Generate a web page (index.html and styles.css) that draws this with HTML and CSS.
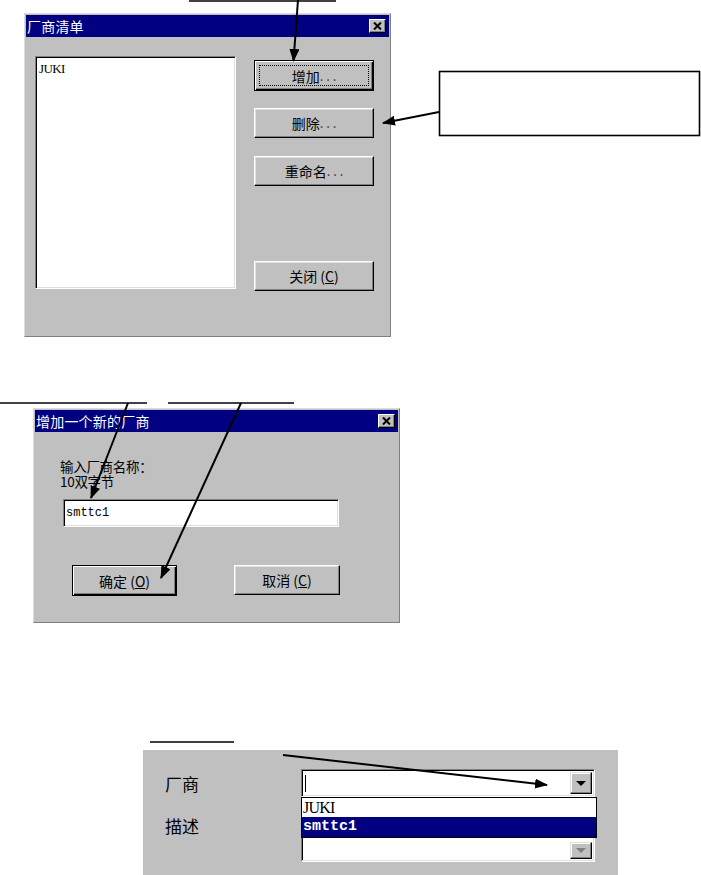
FILE: index.html
```html
<!DOCTYPE html>
<html lang="zh">
<head>
<meta charset="utf-8">
<title>厂商清单</title>
<link rel="stylesheet" href="styles.css">
</head>
<body>
<div class="page">
  <section class="dialog dlg-list">
    <div class="titlebar"><span class="title">厂商清单</span><span class="close"><svg width="9" height="8" viewBox="0 0 9 8"><path d="M1 0.5 L8 7.5 M8 0.5 L1 7.5" stroke="#000" stroke-width="2"/></svg></span></div>
    <div class="dlg-body list-body">
      <div class="listbox"><div class="serif-item">JUKI</div></div>
      <div class="btn-col">
        <button class="btn btn-default"><span class="focus">增加<span class="dots">. . .</span></span></button>
        <button class="btn">删除<span class="dots">. . .</span></button>
        <button class="btn">重命名<span class="dots">. . .</span></button>
        <button class="btn btn-close">关闭 (<u>C</u>)</button>
      </div>
    </div>
  </section>

  <section class="dialog dlg-add">
    <div class="titlebar"><span class="title">增加一个新的厂商</span><span class="close"><svg width="9" height="8" viewBox="0 0 9 8"><path d="M1 0.5 L8 7.5 M8 0.5 L1 7.5" stroke="#000" stroke-width="2"/></svg></span></div>
    <div class="dlg-body add-body">
      <div class="prompt">
        <div class="prompt-line">输入厂商名称：</div>
        <div class="prompt-line">10双字节</div>
      </div>
      <div class="textbox">smttc1</div>
      <div class="add-btns">
        <button class="btn btn-default btn-ok">确定 (<u>O</u>)</button>
        <button class="btn btn-cancel">取消 (<u>C</u>)</button>
      </div>
    </div>
  </section>

  <section class="panel">
    <div class="labels">
      <div class="lbl">厂商</div>
      <div class="lbl lbl2">描述</div>
    </div>
    <div class="fields">
      <div class="combo"><div class="combo-text"><span class="caret"></span></div><div class="combo-btn"><span class="tri"></span></div></div>
      <div class="droplist">
        <div class="drop-item serif-big">JUKI</div>
        <div class="drop-item mono-big selected">smttc1</div>
      </div>
      <div class="combo combo2"><div class="combo-text"></div><div class="combo-btn"><span class="tri tri-dis"></span></div></div>
    </div>
  </section>

  <svg class="overlay" width="701" height="875" viewBox="0 0 701 875">
    <defs>
      <marker id="ah" markerWidth="13" markerHeight="10" refX="12" refY="5" orient="auto" markerUnits="userSpaceOnUse">
        <path d="M0,0 L13,5 L0,10 z" fill="#000"/>
      </marker>
    </defs>
    <g stroke="#000" fill="none">
      <line x1="189" y1="1" x2="336" y2="1" stroke-width="1.4"/>
      <line x1="298" y1="0" x2="293.5" y2="61" stroke-width="2" marker-end="url(#ah)"/>
      <rect x="439.5" y="71.5" width="260" height="64" fill="#fff" stroke-width="1.6"/>
      <line x1="439" y1="112" x2="383" y2="123" stroke-width="2" marker-end="url(#ah)"/>
      <line x1="0" y1="403" x2="147" y2="403" stroke-width="1.4"/>
      <line x1="168" y1="403" x2="294" y2="403" stroke-width="1.4"/>
      <line x1="128" y1="403" x2="91" y2="498" stroke-width="2" marker-end="url(#ah)"/>
      <line x1="241" y1="403" x2="161" y2="578" stroke-width="2" marker-end="url(#ah)"/>
      <line x1="150" y1="742" x2="234" y2="742" stroke-width="1.4"/>
      <line x1="283" y1="755" x2="547" y2="785" stroke-width="2" marker-end="url(#ah)"/>
    </g>
  </svg>
</div>
</body>
</html>
```

FILE: styles.css
```css
* { box-sizing: border-box; }
html, body { margin: 0; padding: 0; background: #fff; }
body {
  font-family: "Noto Sans CJK SC", "Liberation Sans", sans-serif;
  color: #000;
  width: 701px;
  height: 875px;
  overflow: hidden;
}
.page { position: relative; width: 701px; height: 875px; padding-top: 13px; }

.dialog {
  background: #c0c0c0;
  border: 1px solid;
  border-color: #dcdcdc #7f7f7f #7f7f7f #dcdcdc;
  padding: 1px;
  display: flex;
  flex-direction: column;
}
.dlg-list { margin-left: 24px; width: 367px; height: 324px; }
.dlg-add { margin-left: 33px; margin-top: 71px; width: 367px; height: 215px; }

.titlebar {
  height: 22px;
  background: #000080;
  color: #fff;
  display: flex;
  align-items: center;
  justify-content: space-between;
  padding: 0 3px 0 1px;
}
.title { font-size: 14px; line-height: 16px; letter-spacing: 0.2px; }
.close {
  width: 17px;
  height: 14px;
  background: #c0c0c0;
  border: 1px solid;
  border-color: #fff #000 #000 #fff;
  box-shadow: inset -1px -1px #808080;
  display: flex;
  align-items: center;
  justify-content: center;
}
.close svg { display: block; }

.dlg-body { flex: 1; }
.list-body { display: flex; padding: 19px 0 0 9px; gap: 18px; }

.listbox {
  width: 201px;
  height: 233px;
  background: #fff;
  border: 1px solid;
  border-color: #808080 #fff #fff #808080;
  box-shadow: inset 1px 1px #000, inset -1px -1px #dfdfdf;
  padding: 4px 3px;
}
.serif-item {
  font-family: "Liberation Serif", serif;
  font-size: 13px;
  line-height: 15px;
  letter-spacing: -0.6px;
}

.btn-col {
  display: flex;
  flex-direction: column;
  gap: 17px;
  padding-top: 4px;
  height: 235px;
}
.btn {
  font-family: "Noto Sans CJK SC", "Liberation Sans", sans-serif;
  font-size: 14px;
  color: #000;
  width: 120px;
  height: 30px;
  padding: 0;
  background: #c0c0c0;
  border: 1px solid;
  border-color: #fff #000 #000 #fff;
  box-shadow: inset -1px -1px #808080, inset 1px 1px #dfdfdf;
  display: flex;
  align-items: center;
  justify-content: center;
  line-height: 18px;
}
.btn-col .btn:nth-child(3) { margin-top: 1px; }
.btn-default {
  border: 1px solid #000;
  box-shadow: inset 1px 1px #fff, inset -1px -1px #000, inset -2px -2px #808080;
  height: 31px;
}
.focus {
  display: flex;
  align-items: center;
  justify-content: center;
  width: 110px;
  height: 21px;
  border: 1px dotted #000;
}
.dots { color: #333; letter-spacing: 0; font-size: 13px; }
.btn-close { margin-top: auto; }
u { text-decoration: underline; text-underline-offset: 1px; }

.add-body { padding: 26px 0 0 25px; }
.prompt { font-size: 13.5px; letter-spacing: -0.3px; }
.prompt-line { height: 15px; line-height: 16px; }
.textbox {
  margin: 11px 0 0 3px;
  width: 276px;
  height: 28px;
  background: #fff;
  border: 1px solid;
  border-color: #808080 #fff #fff #808080;
  box-shadow: inset 1px 1px #000, inset -1px -1px #dfdfdf;
  font-family: "Liberation Mono", monospace;
  font-size: 12px;
  line-height: 14px;
  padding: 6px 2px;
}
.add-btns { display: flex; gap: 57px; margin: 38px 0 0 12px; }
.btn-ok { width: 105px; height: 31px; }
.btn-cancel { width: 106px; }

.panel {
  margin: 127px 0 0 143px;
  width: 475px;
  height: 125px;
  background: #c0c0c0;
  display: flex;
  padding: 19px 0 0 22px;
}
.labels { width: 136px; display: flex; flex-direction: column; }
.lbl { height: 30px; font-size: 17px; line-height: 30px; }
.lbl2 { margin-top: 12px; }
.fields { width: 296px; display: flex; flex-direction: column; }
.combo {
  width: 294px;
  height: 28px;
  background: #fff;
  border: 1px solid;
  border-color: #808080 #fff #fff #808080;
  box-shadow: inset 1px 1px #000, inset -1px -1px #dfdfdf;
  display: flex;
  padding: 2px;
}
.combo-text { flex: 1; display: flex; align-items: center; padding-left: 1px; }
.caret { display: block; width: 1px; height: 17px; background: #000; }
.combo-btn {
  width: 22px;
  background: #c0c0c0;
  border: 1px solid;
  border-color: #dfdfdf #000 #000 #dfdfdf;
  box-shadow: inset -1px -1px #808080, inset 1px 1px #fff;
  display: flex;
  align-items: center;
  justify-content: center;
}
.tri {
  width: 0;
  height: 0;
  border-left: 5px solid transparent;
  border-right: 5px solid transparent;
  border-top: 5px solid #000;
}
.tri-dis { border-top-color: #808080; }
.droplist {
  width: 296px;
  height: 41px;
  background: #fff;
  border: 1px solid #000;
}
.drop-item { height: 19px; line-height: 19px; padding-left: 1px; }
.serif-big { font-family: "Liberation Serif", serif; font-size: 16px; letter-spacing: -0.8px; }
.mono-big { font-family: "Liberation Mono", monospace; font-size: 15px; font-weight: bold; }
.selected { background: #000080; color: #fff; height: 20px; }
.combo2 { height: 24px; border-top: none; box-shadow: inset -1px -1px #dfdfdf, inset 1px 0 #000; }
.combo2 .combo-btn { margin: 2px 0 0; }

.overlay { position: absolute; left: 0; top: 0; pointer-events: none; }
```
